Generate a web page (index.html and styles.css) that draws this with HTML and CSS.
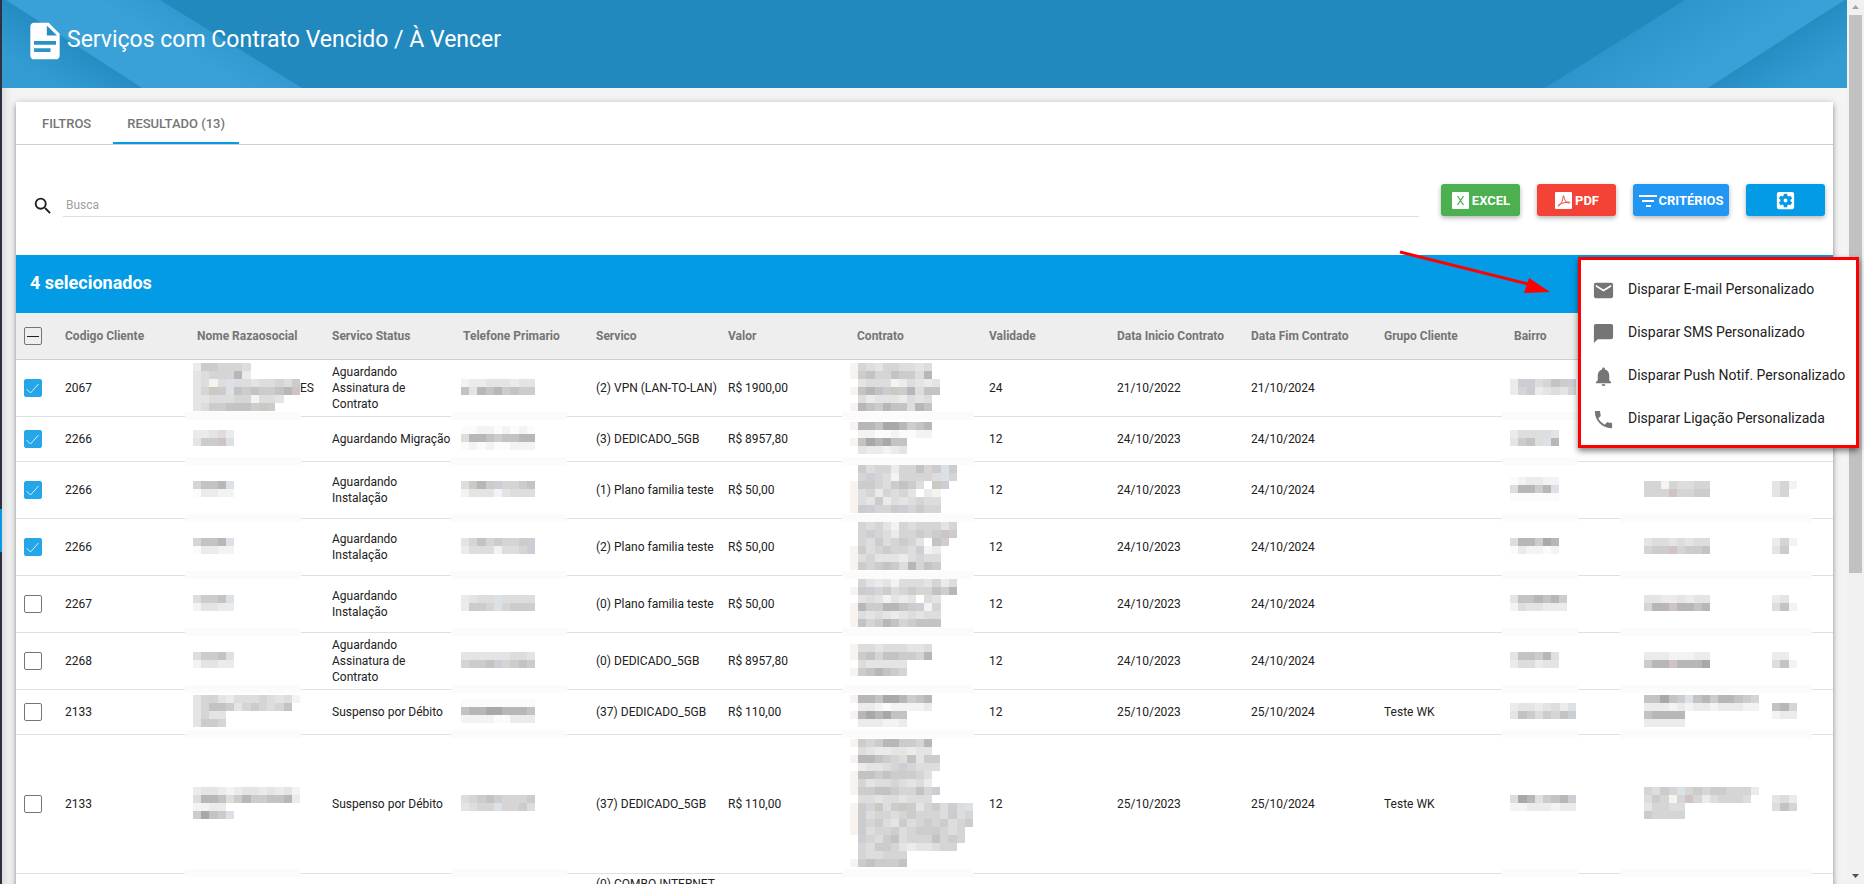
FILE: index.html
```
<!DOCTYPE html>
<html lang="pt-BR">
<head>
  <meta charset="UTF-8">
  <meta name="viewport" content="width=device-width, initial-scale=1.0">
  <title>Serviços com Contrato Vencido / À Vencer</title>
  <link rel="stylesheet" href="styles.css">
</head>
<body>

  <div class="side-strip"><span></span></div>

  <main class="content">
    <header class="page-header">
      <svg class="header-art left" width="310" height="88" viewBox="0 0 310 88">
        <defs>
          <linearGradient id="bandLeft" gradientUnits="userSpaceOnUse" x1="70" y1="44" x2="125" y2="-48">
            <stop offset="0" stop-color="#39a1d8"/>
            <stop offset="0.45" stop-color="#39a1d8"/>
            <stop offset="1" stop-color="#2c94cb"/>
          </linearGradient>
          <linearGradient id="cornerLeft" gradientUnits="userSpaceOnUse" x1="70" y1="44" x2="48" y2="80">
            <stop offset="0" stop-color="#268dc3"/>
            <stop offset="1" stop-color="#319bd2"/>
          </linearGradient>
        </defs>
        <path d="M0 0h4l136 88H0z" fill="url(#cornerLeft)"/>
        <path d="M4 0h154l142 88H140z" fill="url(#bandLeft)"/>
      </svg>
      <svg class="header-art right" width="302" height="88" viewBox="0 0 302 88">
        <defs>
          <linearGradient id="bandRight" gradientUnits="userSpaceOnUse" x1="70" y1="44" x2="108" y2="104">
            <stop offset="0" stop-color="#2d95cc"/>
            <stop offset="1" stop-color="#39a1d8"/>
          </linearGradient>
          <linearGradient id="cornerRight" gradientUnits="userSpaceOnUse" x1="231" y1="44" x2="255" y2="82">
            <stop offset="0" stop-color="#268dc3"/>
            <stop offset="1" stop-color="#319bd2"/>
          </linearGradient>
        </defs>
        <path d="M140 0h160L163 88H0z" fill="url(#bandRight)"/>
        <path d="M300 0h2v88H163z" fill="url(#cornerRight)"/>
      </svg>
      <svg class="header-icon" width="44" height="44" viewBox="0 0 24 24" fill="#fff">
        <path d="M14 2H6c-1.100 0-2 .9-2 2v16c0 1.100.9 2 2 2h12c1.100 0 2-.9 2-2V8l-6-6zm1 16H6v-2h9v2zm3-4H6v-2h12v2zm-5-5V3.500L18.500 9H13z"/>
      </svg>
      <h1>Serviços com Contrato Vencido / À Vencer</h1>
    </header>

    <section class="card">
      <nav class="tabs">
        <button type="button" class="tab">FILTROS</button>
        <button type="button" class="tab active">RESULTADO (13)</button>
      </nav>

      <div class="toolbar">
        <label class="search-icon" for="busca" aria-label="Busca">
          <svg width="22" height="22" viewBox="0 0 24 24" fill="#212121">
            <path d="M15.500 14h-.79l-.28-.27A6.470 6.470 0 0 0 16 9.500 6.500 6.500 0 1 0 9.500 16c1.610 0 3.090-.59 4.230-1.570l.27.28v.79l5 4.990L20.490 19l-4.990-5zm-6 0C7.010 14 5 11.990 5 9.500S7.010 5 9.500 5 14 7.010 14 9.500 11.990 14 9.500 14z"/>
          </svg>
        </label>
        <input type="text" id="busca" placeholder="Busca">
        <div class="actions">
          <button type="button" class="btn excel">
            <svg width="19" height="19" viewBox="0 0 19 19">
              <rect x="1" y="1" width="17" height="17" rx="1" fill="#fff"/>
              <path d="M6.500 5l6 9M12.500 5l-6 9" fill="none" stroke="#4caf50" stroke-width="1.300"/>
            </svg>EXCEL
          </button>
          <button type="button" class="btn pdf">
            <svg width="19" height="19" viewBox="0 0 19 19">
              <rect x="1" y="1" width="17" height="17" rx="1" fill="#fff"/>
              <path d="M4.500 15c2-1 4.500-5 4.500-9.500 0-1 1-1 1 0 0 3 2 6.500 5 6.500 1 0 1-1 0-1-3 0-7 1-10 2.500-1 .6-1.200 1.500-.5 1.500z" fill="none" stroke="#f44336"/>
            </svg>PDF
          </button>
          <button type="button" class="btn criteria">
            <svg width="18" height="19" viewBox="0 0 18 19" fill="#fff">
              <path d="M0 4h18v2H0zM3 9h12v2H3zM7 14h5v2H7z"/>
            </svg>CRITÉRIOS
          </button>
          <button type="button" class="btn settings" aria-label="Ações">
            <svg width="23" height="23" viewBox="0 0 24 24" fill="#fff">
              <path d="M12 10c-1.100 0-2 .9-2 2s.9 2 2 2 2-.9 2-2-.9-2-2-2zm7-7H5c-1.110 0-2 .9-2 2v14c0 1.100.89 2 2 2h14c1.110 0 2-.9 2-2V5c0-1.100-.89-2-2-2zm-1.750 9c0 .23-.02.46-.05.68l1.480 1.160c.13.11.17.3.08.45l-1.400 2.420c-.09.15-.27.21-.43.15l-1.740-.7c-.36.28-.76.51-1.180.69l-.26 1.850c-.03.17-.18.3-.35.3h-2.800c-.17 0-.32-.13-.35-.29l-.26-1.850c-.43-.18-.82-.41-1.180-.69l-1.740.7c-.16.06-.34 0-.43-.15l-1.400-2.420a.35.35 0 0 1 .08-.45l1.480-1.160c-.03-.23-.05-.46-.05-.69s.02-.46.05-.68l-1.480-1.160a.35.35 0 0 1-.08-.45l1.400-2.420c.09-.15.27-.21.43-.15l1.740.7c.36-.28.76-.51 1.180-.69l.26-1.850c.03-.17.18-.3.35-.3h2.800c.17 0 .32.13.35.29l.26 1.850c.43.18.82.41 1.180.69l1.740-.7c.16-.06.34 0 .43.15l1.400 2.420c.09.15.05.34-.08.45l-1.480 1.160c.03.23.05.46.05.69z"/>
            </svg>
          </button>
        </div>
      </div>

      <div class="selection-bar">4 selecionados</div>

      <table class="results">
        <colgroup>
          <col class="w-check"><col class="w-code"><col class="w-name"><col class="w-status"><col class="w-phone">
          <col class="w-service"><col class="w-value"><col class="w-contract"><col class="w-term"><col class="w-start">
          <col class="w-end"><col class="w-group"><col class="w-district"><col class="w-city"><col class="w-uf">
        </colgroup>
        <thead>
          <tr>
            <th class="check"><input type="checkbox" id="checkAll" aria-label="Selecionar todos"></th>
            <th>Codigo Cliente</th>
            <th>Nome Razaosocial</th>
            <th>Servico Status</th>
            <th>Telefone Primario</th>
            <th>Servico</th>
            <th>Valor</th>
            <th>Contrato</th>
            <th>Validade</th>
            <th>Data Inicio Contrato</th>
            <th>Data Fim Contrato</th>
            <th>Grupo Cliente</th>
            <th>Bairro</th>
            <th></th>
            <th></th>
          </tr>
        </thead>
        <tbody>
          <tr>
            <td class="check"><input type="checkbox" aria-label="Selecionar 2067" checked></td>
            <td>2067</td>
            <td class="masked name"><div class="mask-line"><span class="mosaic" data-rows="2665554/3455582/34w4b44344546/35y6b7676678r/33444551443/34667776y6"></span><span>ES</span></div></td>
            <td>Aguardando Assinatura de Contrato</td>
            <td class="masked phone"><span class="mosaic" data-rows="122333233/738786766"></span></td>
            <td class="service">(2) VPN (LAN-TO-LAN)</td>
            <td>R$ 1900,00</td>
            <td class="masked contract"><span class="mosaic" data-rows="w543554434/w675576648/.3444124323/w7876y68477/.423332434/w876877487"></span></td>
            <td>24</td>
            <td>21/10/2022</td>
            <td>21/10/2024</td>
            <td></td>
            <td class="masked district"><span class="mosaic" data-rows="2zz4576z/25623435"></span></td>
            <td></td>
            <td></td>
          </tr>
          <tr class="short">
            <td class="check"><input type="checkbox" aria-label="Selecionar 2266" checked></td>
            <td>2266</td>
            <td class="masked name"><span class="mosaic" data-rows="22342/366rb"></span></td>
            <td>Aguardando Migração</td>
            <td class="masked phone"><span class="mosaic" data-rows="001101010/488767788/010100111"></span></td>
            <td class="service">(3) DEDICADO_5GB</td>
            <td>R$ 8957,80</td>
            <td class="masked contract"><span class="mosaic" data-rows="w887998678/.110010011/w798977/.322123"></span></td>
            <td>12</td>
            <td>24/10/2023</td>
            <td>24/10/2024</td>
            <td></td>
            <td class="masked district"><span class="mosaic" data-rows="244443/3674b8"></span></td>
            <td></td>
            <td></td>
          </tr>
          <tr>
            <td class="check"><input type="checkbox" aria-label="Selecionar 2266" checked></td>
            <td>2266</td>
            <td class="masked name"><span class="mosaic" data-rows="5778b/02211"></span></td>
            <td>Aguardando Instalação</td>
            <td class="masked phone"><span class="mosaic" data-rows="4y86z5567/133313444"></span></td>
            <td class="service">(1) Plano familia teste</td>
            <td>R$ 50,00</td>
            <td class="masked contract"><span class="mosaic" data-rows=".6455255756b6/.5z54155554b5/w66546764.yz/w4525453.21/w4362434544/w6z556z5655"></span></td>
            <td>12</td>
            <td>24/10/2023</td>
            <td>24/10/2024</td>
            <td></td>
            <td class="masked district"><span class="mosaic" data-rows="012211/48868b/000000"></span></td>
            <td class="masked city"><span class="mosaic" data-rows="55w54455/555r5566"></span></td>
            <td class="uf"><span class="mosaic" data-rows="351/35"></span></td>
          </tr>
          <tr>
            <td class="check"><input type="checkbox" aria-label="Selecionar 2266" checked></td>
            <td>2266</td>
            <td class="masked name"><span class="mosaic" data-rows="5778b/02211"></span></td>
            <td>Aguardando Instalação</td>
            <td class="masked phone"><span class="mosaic" data-rows="35756556z/24441445z"></span></td>
            <td class="service">(2) Plano familia teste</td>
            <td>R$ 50,00</td>
            <td class="masked contract"><span class="mosaic" data-rows=".545315455535/.5z54255656r6/.54645653.7z/w6456554z12/w4533324544/w6567648576"></span></td>
            <td>12</td>
            <td>24/10/2023</td>
            <td>24/10/2024</td>
            <td></td>
            <td class="masked district"><span class="mosaic" data-rows="488698/021101"></span></td>
            <td class="masked city"><span class="mosaic" data-rows="34434344/566r5667"></span></td>
            <td class="uf"><span class="mosaic" data-rows="251/36"></span></td>
          </tr>
          <tr>
            <td class="check"><input type="checkbox" aria-label="Selecionar 2267"></td>
            <td>2267</td>
            <td class="masked name"><span class="mosaic" data-rows="4667b/13322"></span></td>
            <td>Aguardando Instalação</td>
            <td class="masked phone"><span class="mosaic" data-rows="2344b4444/2665b566z"></span></td>
            <td class="service">(0) Plano familia teste</td>
            <td>R$ 50,00</td>
            <td class="masked contract"><span class="mosaic" data-rows=".532314443524/w6z56456557z8/.3431323.43/w8668876z15/w4343234344/w7568756777"></span></td>
            <td>12</td>
            <td>24/10/2023</td>
            <td>24/10/2024</td>
            <td></td>
            <td class="masked district"><span class="mosaic" data-rows="3778786/1433222"></span></td>
            <td class="masked city"><span class="mosaic" data-rows="33223233/588r8878"></span></td>
            <td class="uf"><span class="mosaic" data-rows="23/471"></span></td>
          </tr>
          <tr>
            <td class="check"><input type="checkbox" aria-label="Selecionar 2268"></td>
            <td>2268</td>
            <td class="masked name"><span class="mosaic" data-rows="4667b/13322"></span></td>
            <td>Aguardando Assinatura de Contrato</td>
            <td class="masked phone"><span class="mosaic" data-rows="333333443/5667z5676"></span></td>
            <td class="service">(0) DEDICADO_5GB</td>
            <td>R$ 8957,80</td>
            <td class="masked contract"><span class="mosaic" data-rows="w443444334/w675776658/.433333/w678765"></span></td>
            <td>12</td>
            <td>24/10/2023</td>
            <td>24/10/2024</td>
            <td></td>
            <td class="masked district"><span class="mosaic" data-rows="37768b/244233"></span></td>
            <td class="masked city"><span class="mosaic" data-rows="22211122/688r8889"></span></td>
            <td class="uf"><span class="mosaic" data-rows="22/471"></span></td>
          </tr>
          <tr class="short">
            <td class="check"><input type="checkbox" aria-label="Selecionar 2133"></td>
            <td>2133</td>
            <td class="masked name"><span class="mosaic" data-rows="3553244454341/357763565457/3533/3665"></span></td>
            <td>Suspenso por Débito</td>
            <td class="masked phone"><span class="mosaic" data-rows="000000000/788998887/111100222"></span></td>
            <td class="service">(37) DEDICADO_5GB</td>
            <td>R$ 110,00</td>
            <td class="masked contract"><span class="mosaic" data-rows="w887998678/.221011112/w898977/.222112"></span></td>
            <td>12</td>
            <td>25/10/2023</td>
            <td>25/10/2024</td>
            <td>Teste WK</td>
            <td class="masked district"><span class="mosaic" data-rows="2332342b/3764657z"></span></td>
            <td class="masked city"><span class="mosaic" data-rows="77976b78688765/22212122122211/78888/22222"></span></td>
            <td class="uf"><span class="mosaic" data-rows="785/122"></span></td>
          </tr>
          <tr class="tall">
            <td class="check"><input type="checkbox" aria-label="Selecionar 2133"></td>
            <td>2133</td>
            <td class="masked name"><span class="mosaic" data-rows="2332123323231/4887468667782/1122/6976b"></span></td>
            <td>Suspenso por Débito</td>
            <td class="masked phone"><span class="mosaic" data-rows="4567z5556/3455b5564"></span></td>
            <td class="service">(37) DEDICADO_5GB</td>
            <td>R$ 110,00</td>
            <td class="masked contract"><span class="mosaic" data-rows="w656886658/.432233233/w8876547366/.23345z5444/w77676665b/w534454342/w667765575z/.443443444/w65y46y63564z4b/w64554565554645/w65643645656456/w6455z456z6545/.z546745557565/.546653233455/.544555/w676667"></span></td>
            <td>12</td>
            <td>25/10/2023</td>
            <td>25/10/2024</td>
            <td>Teste WK</td>
            <td class="masked district"><span class="mosaic" data-rows="498b678z/11222122"></span></td>
            <td class="masked city"><span class="mosaic" data-rows="5465b565665552/465w5r5245554/35544/65555"></span></td>
            <td class="uf"><span class="mosaic" data-rows="342/475"></span></td>
          </tr>
          <tr class="cut">
            <td></td><td></td><td></td><td></td><td></td>
            <td class="service">(0) COMBO INTERNET</td>
            <td></td><td></td><td></td><td></td><td></td><td></td><td></td><td></td><td></td>
          </tr>
        </tbody>
      </table>
    </section>
  </main>

  <div class="scrollbar">
    <svg width="17" height="15" viewBox="0 0 17 15"><path d="M5 9l3.500-4L12 9z" fill="#a3a3a3"/></svg>
    <div class="thumb"></div>
    <svg class="down" width="17" height="15" viewBox="0 0 17 15"><path d="M5 5l3.500 4L12 5z" fill="#505050"/></svg>
  </div>

  <svg class="arrow" width="156" height="48" viewBox="0 0 156 48">
    <path d="M3 4l128 32" stroke="#f00" stroke-width="3"/>
    <path d="M132 30l21 14-26 1z" fill="#f00"/>
  </svg>

  <div class="menu">
    <button type="button" class="menu-item">
      <svg width="23" height="23" viewBox="0 0 24 24"><path d="M20 4H4c-1.100 0-1.990.9-1.990 2L2 18c0 1.100.9 2 2 2h16c1.100 0 2-.9 2-2V6c0-1.100-.9-2-2-2zm0 4l-8 5-8-5V6l8 5 8-5v2z"/></svg>
      Disparar E-mail Personalizado
    </button>
    <button type="button" class="menu-item">
      <svg width="23" height="23" viewBox="0 0 24 24"><path d="M20 2H4c-1.100 0-1.990.9-1.990 2L2 22l4-4h14c1.100 0 2-.9 2-2V4c0-1.100-.9-2-2-2z"/></svg>
      Disparar SMS Personalizado
    </button>
    <button type="button" class="menu-item">
      <svg width="23" height="23" viewBox="0 0 24 24"><path d="M12 22c1.100 0 2-.9 2-2h-4c0 1.100.89 2 2 2zm6-6v-5c0-3.070-1.640-5.640-4.500-6.320V4c0-.83-.67-1.500-1.500-1.500s-1.500.67-1.500 1.500v.68C7.630 5.360 6 7.920 6 11v5l-2 2v1h16v-1l-2-2z"/></svg>
      Disparar Push Notif. Personalizado
    </button>
    <button type="button" class="menu-item">
      <svg width="23" height="23" viewBox="0 0 24 24"><path d="M6.620 10.790c1.440 2.830 3.760 5.140 6.590 6.590l2.200-2.200c.27-.27.67-.36 1.020-.24 1.120.37 2.330.57 3.570.57.55 0 1 .45 1 1V20c0 .55-.45 1-1 1-9.390 0-17-7.610-17-17 0-.55.45-1 1-1h3.500c.55 0 1 .45 1 1 0 1.250.2 2.450.57 3.570.11.35.03.74-.25 1.020l-2.200 2.200z"/></svg>
      Disparar Ligação Personalizada
    </button>
  </div>

  <script src="script.js"></script>
</body>
</html>
```

FILE: styles.css
```
* {
  box-sizing: border-box;
}
body {
  margin: 0;
  height: 100vh;
  overflow: hidden;
  display: flex;
  position: relative;
  background: #f4f4f4;
  font-family: Roboto, sans-serif;
  font-size: 12px;
  color: #212121;
}
button {
  font-family: inherit;
  border: none;
  cursor: pointer;
}

/* left edge of the collapsed side menu */
.side-strip {
  flex: 0 0 2px;
  background: #2f3142;
  display: flex;
  align-items: flex-end;
  padding-bottom: 332px;
}
.side-strip span {
  width: 2px;
  height: 43px;
  background: #039be5;
}
.content {
  flex: 1;
  min-width: 0;
  box-shadow: inset 7px 0 8px -4px rgba(0,0,0,0.12);
}

.page-header {
  position: relative;
  display: flex;
  align-items: center;
  height: 88px;
  padding: 0 21px 6px;
  background: #2189be;
  color: #fff;
}
.header-art {
  position: absolute;
  top: 0;
}
.header-art.left {
  left: 0;
}
.header-art.right {
  right: 0;
}
.header-icon {
  position: relative;
}
.page-header h1 {
  position: relative;
  margin: 0;
  font-size: 23px;
  line-height: 32px;
  font-weight: 400;
  padding-bottom: 2px;
}

.card {
  margin: 14px 14px 0;
  background: #fff;
  box-shadow: 0 1px 8px rgba(0,0,0,0.2), 0 3px 4px rgba(0,0,0,0.3);
}
.tabs {
  display: flex;
  gap: 8px;
  padding-left: 12px;
  border-bottom: 1px solid #cfcfcf;
}
.tab {
  height: 42px;
  padding: 0 14px;
  background: none;
  border-top: 2px solid transparent;
  border-bottom: 2px solid transparent;
  color: #757575;
  font-size: 13px;
  font-weight: 500;
}
.tab.active {
  border-bottom-color: #039be5;
}

.toolbar {
  display: flex;
  align-items: flex-start;
  padding: 39px 8px 38px 16px;
}
.search-icon {
  width: 31px;
  height: 33px;
  padding-top: 11px;
}
#busca {
  flex: 1;
  height: 33px;
  padding: 10px 3px 0;
  border: none;
  border-bottom: 1px solid #e0e0e0;
  outline: none;
  background: none;
  font-family: inherit;
  font-size: 12px;
}
#busca::placeholder {
  color: #a0a0a0;
}
.actions {
  display: flex;
  gap: 17px;
  margin-left: 22px;
}
.btn {
  display: flex;
  align-items: center;
  justify-content: center;
  gap: 2px;
  min-width: 79px;
  height: 32px;
  padding: 0 4px;
  border-radius: 3px;
  color: #fff;
  font-size: 13px;
  font-weight: 700;
  box-shadow: 0 2px 5px rgba(0,0,0,0.3);
}
.excel {
  background: #4caf50;
}
.pdf {
  background: #f44336;
}
.criteria {
  min-width: 96px;
  background: #2196f3;
}
.settings {
  background: #039be5;
}

.selection-bar {
  height: 58px;
  padding-left: 14px;
  background: #039be5;
  color: #fff;
  font-size: 18px;
  font-weight: 700;
  line-height: 56px;
}

.results {
  width: 100%;
  table-layout: fixed;
  border-collapse: separate;
  border-spacing: 0;
}
.w-check { width: 49px; }
.w-code { width: 132px; }
.w-name { width: 135px; }
.w-status { width: 131px; }
.w-phone { width: 133px; }
.w-service { width: 132px; }
.w-value { width: 129px; }
.w-contract { width: 132px; }
.w-term { width: 128px; }
.w-start { width: 134px; }
.w-end { width: 133px; }
.w-group { width: 130px; }
.w-district { width: 134px; }
.w-city { width: 128px; }
.w-uf { width: 57px; }

.results th {
  height: 47px;
  padding: 0;
  background: #eee;
  border-bottom: 1px solid #cfcfcf;
  color: #757575;
  font-weight: 700;
  text-align: left;
  white-space: nowrap;
}
.results td {
  position: relative;
  height: 57px;
  padding: 0 12px 0 0;
  border-bottom: 1px solid #e0e0e0;
  line-height: 16px;
}
.results .service {
  white-space: nowrap;
}
.results .short td {
  height: 45px;
}
.results .tall td {
  height: 139px;
}
.results .cut td {
  padding-top: 2px;
  vertical-align: top;
}
.results th.check,
.results td.check {
  padding: 0 0 0 8px;
}
.check input {
  display: block;
  appearance: none;
  width: 18px;
  height: 18px;
  margin: 0;
  border: 1px solid #757575;
  border-radius: 2px;
  background: #fff center no-repeat;
}
.check input:checked {
  border-color: #24a6e8;
  background-color: #24a6e8;
  background-image: url("data:image/svg+xml,%3Csvg xmlns='http://www.w3.org/2000/svg' width='16' height='16'%3E%3Cpath d='M1.500 9l4 4 8-9' fill='none' stroke='%23d5eefb'/%3E%3C/svg%3E");
}
.check input:indeterminate {
  background-color: #eee;
  background-image: url("data:image/svg+xml,%3Csvg xmlns='http://www.w3.org/2000/svg' width='16' height='16'%3E%3Cpath d='M2 8.500h12' stroke='%23212121'/%3E%3C/svg%3E");
}

/* hidden customer data */
.mosaic {
  display: block;
  margin: 0 0 3px -4px;
}
.mosaic svg {
  display: block;
}
.phone .mosaic {
  margin-left: -2px;
}
.contract .mosaic {
  margin-left: -7px;
}
.mask-line {
  display: flex;
  align-items: center;
  white-space: nowrap;
}
.results .masked {
  padding-right: 0;
}
.masked::after {
  content: "";
  position: absolute;
  z-index: 1;
  left: -12px;
  bottom: -4px;
  width: 116px;
  height: 8px;
  background: #fbfbfb;
}
.contract::after {
  left: -15px;
  width: 132px;
}
.district::after {
  width: 76px;
}
.city::after {
  left: -28px;
  width: 192px;
}

.scrollbar {
  flex: 0 0 17px;
  display: flex;
  flex-direction: column;
  background: #f1f1f1;
}
.thumb {
  flex: 0 0 65%;
  max-height: 558px;
  margin: 0 2px;
  background: #c1c1c1;
}
.scrollbar .down {
  margin-top: auto;
}

.arrow {
  position: absolute;
  z-index: 2;
  top: 248px;
  right: 311px;
}
.menu {
  position: absolute;
  z-index: 2;
  top: 257px;
  right: 5px;
  width: 281px;
  padding: 7px 0 6px;
  background: #fff;
  border: 3px solid #f00;
  box-shadow: 0 3px 6px rgba(0,0,0,0.5);
}
.menu-item {
  display: flex;
  align-items: center;
  gap: 13px;
  width: 100%;
  height: 43px;
  padding: 0 11px;
  background: none;
  color: #212121;
  font-size: 14px;
  white-space: nowrap;
}
.menu-item svg {
  flex: none;
  margin-top: 3px;
  fill: #757575;
}
```

FILE: script.js
```
document.getElementById('checkAll').indeterminate = true;

const shades = {
  0: '#fbfbfb', 1: '#f3f3f4', 2: '#ebebec', 3: '#e4e4e4', 4: '#dddddd',
  5: '#d5d5d6', 6: '#cccccd', 7: '#c4c3c4', 8: '#b7b7b9', 9: '#a9a7a8',
  b: '#dce1e7', r: '#cfc4c3', w: '#f8f3ee', y: '#cbc9c2', z: '#cdced5'
};

document.querySelectorAll('.mosaic').forEach((el) => {
  const rows = el.dataset.rows.split('/');
  const cols = Math.max(...rows.map((r) => r.length));
  let rects = '';
  rows.forEach((row, y) => {
    [...row].forEach((c, x) => {
      if (shades[c]) {
        rects += `<rect x="${x}" y="${y}" width="1" height="1" fill="${shades[c]}"/>`;
      }
    });
  });
  const width = Math.round(cols * 8.2);
  el.innerHTML = `<svg width="${width}" height="${rows.length * 8}" viewBox="0 0 ${cols} ${rows.length}" preserveAspectRatio="none" shape-rendering="crispEdges">${rects}</svg>`;
});
```
